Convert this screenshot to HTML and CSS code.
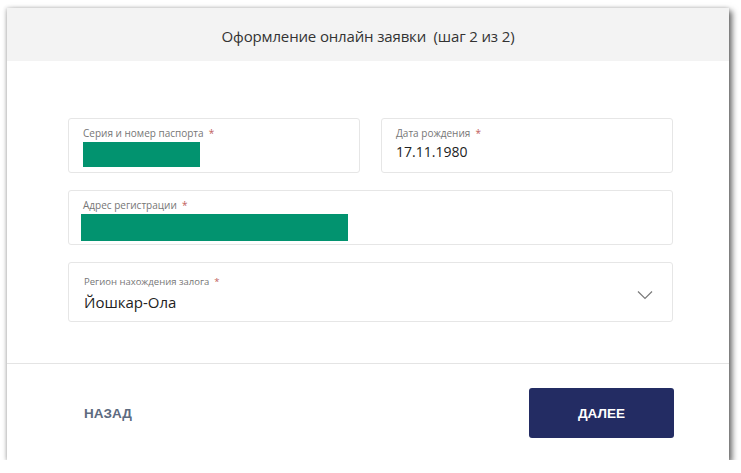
FILE: index.html
```html
<!DOCTYPE html>
<html lang="ru">
<head>
<meta charset="utf-8">
<link rel="stylesheet" href="styles.css">
</head>
<body>
<div class="card">
  <div class="header">Оформление онлайн заявки&nbsp; (шаг 2 из 2)</div>
  <div class="body">
    <div class="row two">
      <div class="field">
        <div class="label">Серия и номер паспорта&nbsp; <span class="req">*</span></div>
        <div class="mask mask-passport"></div>
      </div>
      <div class="field">
        <div class="label">Дата рождения&nbsp; <span class="req">*</span></div>
        <div class="value">17.11.1980</div>
      </div>
    </div>
    <div class="field">
      <div class="label">Адрес регистрации&nbsp; <span class="req">*</span></div>
      <div class="mask mask-address"></div>
    </div>
    <div class="field select">
      <div class="select-text">
        <div class="label small">Регион нахождения залога&nbsp; <span class="req">*</span></div>
        <div class="value big">Йошкар-Ола</div>
      </div>
      <svg class="chev" width="16" height="10" viewBox="0 0 16 10"><path d="M1 1.5 L8 8.5 L15 1.5" fill="none" stroke="#7a7a7a" stroke-width="1.2"/></svg>
    </div>
  </div>
  <div class="footer">
    <button class="btn-back">НАЗАД</button>
    <button class="btn-next">ДАЛЕЕ</button>
  </div>
</div>
</body>
</html>
```
FILE: styles.css
```css
html, body {
  margin: 0;
  padding: 0;
  background: #ffffff;
}
body {
  padding: 8px 0 0 7px;
  font-family: "Open Sans", "Noto Sans", sans-serif;
}
.card {
  width: 722px;
  height: 452px;
  background: #ffffff;
  box-shadow: 3px 3px 6px rgba(0, 0, 0, 0.6), -1px 0 4px rgba(0, 0, 0, 0.2);
  display: flex;
  flex-direction: column;
}
.header {
  height: 53px;
  background: #f3f3f3;
  display: flex;
  align-items: center;
  justify-content: center;
  font-size: 15px;
  color: #333333;
  letter-spacing: -0.15px;
  padding-top: 2px;
  box-sizing: border-box;
}
.body {
  padding: 57px 56px 41px 61px;
  display: flex;
  flex-direction: column;
  gap: 17px;
  border-bottom: 1px solid #e4e4e4;
}
.row.two {
  display: grid;
  grid-template-columns: 1fr 1fr;
  gap: 21px;
}
.field {
  box-sizing: border-box;
  height: 55px;
  border: 1px solid #e6e6e6;
  border-radius: 3px;
  padding: 7px 14px 0 14px;
}
.label {
  font-size: 10px;
  color: #767676;
  line-height: 15px;
}
.req {
  color: #c0605c;
}
.value {
  font-size: 14px;
  color: #222222;
  line-height: 21px;
}
.mask {
  background: #02936f;
  height: 25px;
  margin-top: 1px;
}
.mask-passport {
  width: 117px;
}
.mask-address {
  width: 267px;
  height: 27px;
  margin-left: -2px;
}
.field.select {
  height: 60px;
  display: flex;
  align-items: center;
  justify-content: space-between;
  padding: 11px 19px 0 15px;
}
.select-text {
  align-self: flex-start;
}
.label.small {
  font-size: 9.5px;
}
.value.big {
  font-size: 15px;
  line-height: 26px;
}
.chev {
  margin-top: -6px;
}
.footer {
  flex: 1;
  display: flex;
  align-items: flex-start;
  justify-content: space-between;
  padding: 24px 55px 0 61px;
}
.btn-back {
  background: none;
  border: none;
  font-family: "Liberation Sans", Arial, sans-serif;
  font-weight: bold;
  font-size: 13.5px;
  color: #5d6b80;
  padding: 0 16px;
  height: 50px;
}
.btn-next {
  width: 145px;
  height: 50px;
  background: #232c63;
  border: none;
  border-radius: 3px;
  color: #ffffff;
  font-family: "Liberation Sans", Arial, sans-serif;
  font-weight: bold;
  font-size: 13.5px;
}
```
